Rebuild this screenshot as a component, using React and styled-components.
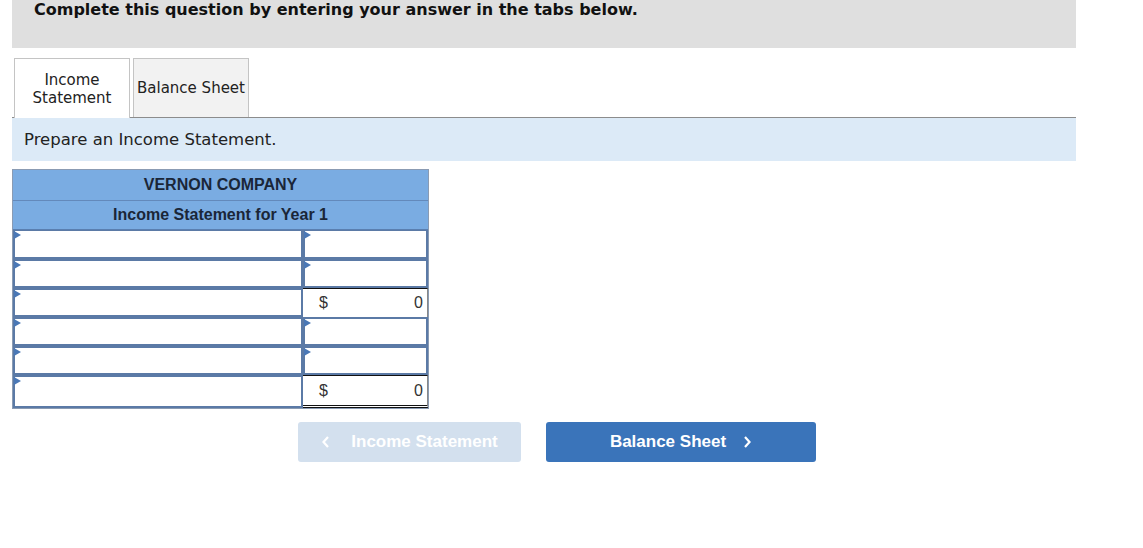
import React from 'react';
import styled, { createGlobalStyle } from 'styled-components';

const GlobalStyle = createGlobalStyle`
  body {
    margin: 0;
    background: #fff;
    font-family: "DejaVu Sans", Verdana, sans-serif;
  }
`;

const Page = styled.div`
  width: 1064px;
  padding-left: 12px;
`;

const Banner = styled.div`
  height: 48px;
  background: #dfdfdf;
  padding-left: 22px;
  box-sizing: border-box;
  font-size: 16px;
  font-weight: bold;
  line-height: 20px;
  color: #111;
`;

const TabRow = styled.div`
  display: flex;
  gap: 3px;
  margin-top: 10px;
  padding-left: 2px;
  border-bottom: 1px solid #8c8c8c;
`;

const Tab = styled.div`
  width: 116px;
  box-sizing: border-box;
  border: 1px solid #c4c4c4;
  border-bottom: none;
  background: ${p => (p.active ? '#fff' : '#f2f2f2')};
  margin-bottom: ${p => (p.active ? '-1px' : '0')};
  height: ${p => (p.active ? '60px' : '59px')};
  display: flex;
  align-items: center;
  justify-content: center;
  text-align: center;
  font-size: 15px;
  line-height: 18px;
  color: #222;
`;

const Instruction = styled.div`
  height: 43px;
  background: #dceaf7;
  padding-left: 12px;
  display: flex;
  align-items: center;
  font-size: 16.5px;
  color: #222;
`;

const Sheet = styled.div`
  margin-top: 8px;
  width: 417px;
  border: 1px solid #8a9bb3;
  box-sizing: border-box;
  display: grid;
  grid-template-columns: 290px 125px;
`;

const HeadCell = styled.div`
  grid-column: 1 / 3;
  height: ${p => p.h}px;
  box-sizing: border-box;
  background: #7aace2;
  border-bottom: 1px solid ${p => (p.last ? '#5a7fb0' : '#6389bb')};
  display: flex;
  align-items: center;
  justify-content: center;
  font-family: "Liberation Sans", Arial, sans-serif;
  font-weight: bold;
  font-size: 16px;
  color: #1a2638;
`;

const Cell = styled.div`
  position: relative;
  height: 29px;
  box-sizing: border-box;
  background: #fff;
  border: 2px solid #5b7aa6;
  border-top-width: ${p => (p.first ? '1px' : '2px')};
`;

const LeftCellTall = styled(Cell)`
  height: 33px;
`;

const Marker = styled.span`
  position: absolute;
  left: -1px;
  top: 0;
  width: 0;
  height: 0;
  border-top: 4px solid transparent;
  border-bottom: 4px solid transparent;
  border-left: 7px solid #4a78b6;
`;

const TotalCell = styled.div`
  height: ${p => (p.double ? '33px' : '29px')};
  box-sizing: border-box;
  background: #fff;
  border-top: 1px solid #111;
  border-bottom: ${p => (p.double ? '3px double #111' : 'none')};
  border-right: 1px solid #888;
  display: flex;
  align-items: center;
  justify-content: space-between;
  padding: 0 4px 0 16px;
  font-family: "Liberation Sans", Arial, sans-serif;
  font-size: 16px;
  color: #333;
`;

const Nav = styled.div`
  display: flex;
  gap: 25px;
  margin-top: 13px;
  padding-left: 286px;
`;

const NavButton = styled.div`
  width: ${p => p.w}px;
  height: 40px;
  border-radius: 3px;
  background: ${p => (p.disabled ? '#d3e0ee' : '#3a74ba')};
  color: #fff;
  display: flex;
  align-items: center;
  justify-content: center;
  gap: ${p => (p.disabled ? '20px' : '16px')};
  font-family: "Liberation Sans", Arial, sans-serif;
  font-weight: bold;
  font-size: 17px;
`;

const Chevron = ({ dir }) => (
  <svg width="10" height="14" viewBox="0 0 10 14">
    <path
      d={dir === 'left' ? 'M7 2 L2.5 7 L7 12' : 'M3 2 L7.5 7 L3 12'}
      fill="none"
      stroke="#fff"
      strokeWidth="2.2"
    />
  </svg>
);

const rows = [
  { total: false },
  { total: false },
  { total: true },
  { total: false },
  { total: false },
  { total: true, last: true },
];

export default function App() {
  return (
    <>
      <GlobalStyle />
      <Page>
        <Banner>Complete this question by entering your answer in the tabs below.</Banner>
        <TabRow>
          <Tab active>Income<br />Statement</Tab>
          <Tab>Balance Sheet</Tab>
        </TabRow>
        <Instruction>Prepare an Income Statement.</Instruction>
        <Sheet>
          <HeadCell h={31}>VERNON COMPANY</HeadCell>
          <HeadCell h={29} last>Income Statement for Year 1</HeadCell>
          {rows.map((r, i) => {
            const Left = r.last ? LeftCellTall : Cell;
            return (
              <React.Fragment key={i}>
                <Left first={i === 0}><Marker /></Left>
                {r.total ? (
                  <TotalCell double={r.last}>
                    <span>$</span>
                    <span>0</span>
                  </TotalCell>
                ) : (
                  <Cell first={i === 0}><Marker /></Cell>
                )}
              </React.Fragment>
            );
          })}
        </Sheet>
        <Nav>
          <NavButton w={223} disabled>
            <Chevron dir="left" />
            <span>Income Statement</span>
          </NavButton>
          <NavButton w={270}>
            <span>Balance Sheet</span>
            <Chevron dir="right" />
          </NavButton>
        </Nav>
      </Page>
    </>
  );
}
